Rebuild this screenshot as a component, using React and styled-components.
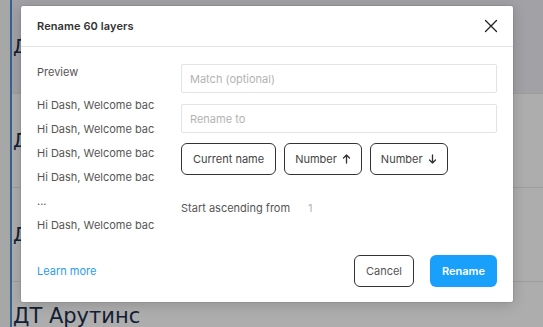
import React, { useState } from 'react';
import styled, { createGlobalStyle } from 'styled-components';

const GlobalStyle = createGlobalStyle`
    html, body { margin: 0; padding: 0; }
    body {
        width: 543px;
        height: 327px;
        overflow: hidden;
        font-family: Inter, "Noto Sans", sans-serif;
        background: #ffffff;
    }
`

const Page = styled.div`
    position: relative;
    width: 543px;
    height: 327px;
    overflow: hidden;
    display: flex;
`

const Gutter = styled.div`
    width: 10px;
    flex: none;
    background: #f7f7f7;
    border-right: 2px solid #4f93d6;
`

const Table = styled.div`
    flex: 1;
    display: flex;
    flex-direction: column;
`

const Row = styled.div`
    height: 94px;
    flex: none;
    border-bottom: 1px solid #e8e8e8;
    background: ${p => p.$head ? '#efeef4' : '#ffffff'};
    padding: 34px 0 0 1px;
    box-sizing: border-box;
    font-family: "DejaVu Sans", sans-serif;
    font-size: 20px;
    color: #1c2f4d;
    white-space: nowrap;
`

const LastRow = styled(Row)`
    height: auto;
    padding-top: 22px;
    font-size: 21px;
    border-bottom: none;
`

const Overlay = styled.div`
    position: absolute;
    inset: 0;
    background: rgba(0, 0, 0, 0.32);
    padding: 6px 0 0 21px;
    box-sizing: border-box;
`

const Modal = styled.div`
    width: 492px;
    height: 296px;
    background: #ffffff;
    border-radius: 2px;
    box-shadow: 0 2px 14px rgba(0, 0, 0, 0.18), 0 0 0 0.5px rgba(0, 0, 0, 0.12);
    display: flex;
    flex-direction: column;
`

const Header = styled.div`
    height: 40px;
    flex: none;
    display: flex;
    align-items: center;
    justify-content: space-between;
    padding: 0 14px 0 16px;
    border-bottom: 1px solid #e5e5e5;
`

const Title = styled.div`
    font-size: 11px;
    font-weight: 600;
    color: #333333;
    letter-spacing: 0.1px;
`

const CloseButton = styled.button`
    border: none;
    background: none;
    padding: 0;
    width: 16px;
    height: 16px;
    display: flex;
    align-items: center;
    justify-content: center;
    cursor: pointer;
`

const Body = styled.div`
    flex: 1;
    display: flex;
    padding: 17px 16px 0 16px;
`

const PreviewCol = styled.div`
    width: 144px;
    flex: none;
    display: flex;
    flex-direction: column;
`

const PreviewLabel = styled.div`
    font-size: 11px;
    color: #555555;
    line-height: 14px;
    margin: 1px 0 19px;
`

const PreviewItem = styled.div`
    font-size: 11px;
    color: #555555;
    line-height: 14px;
    height: 24px;
    white-space: nowrap;
`

const FormCol = styled.div`
    flex: 1;
    display: flex;
    flex-direction: column;
`

const Field = styled.input`
    height: 29px;
    box-sizing: border-box;
    border: 1px solid #e3e3e3;
    border-radius: 2px;
    padding: 0 8px;
    font-family: inherit;
    font-size: 11px;
    color: #333333;
    margin-bottom: ${p => p.$gap || 11}px;
    outline: none;
    &::placeholder { color: #b3b3b3; }
`

const ChipRow = styled.div`
    display: flex;
    gap: 8px;
`

const Chip = styled.button`
    height: 32px;
    box-sizing: border-box;
    border: 1px solid #333333;
    border-radius: 6px;
    background: #ffffff;
    padding: 0 ${p => p.$pad || 12}px;
    font-family: inherit;
    font-size: 11px;
    color: #444444;
    display: flex;
    align-items: center;
    gap: 5px;
    cursor: pointer;
`

const StartLine = styled.div`
    display: flex;
    align-items: center;
    margin-top: 26px;
    font-size: 11px;
    color: #555555;
    line-height: 14px;
`

const StartValue = styled.span`
    margin-left: 18px;
    color: #b3b3b3;
`

const Footer = styled.div`
    height: 47px;
    flex: none;
    display: flex;
    align-items: flex-start;
    padding: 0 16px;
`

const LearnMore = styled.a`
    font-size: 11px;
    color: #2c9bf0;
    text-decoration: none;
    margin-top: 9px;
    flex: 1;
    cursor: pointer;
`

const CancelButton = styled.button`
    width: 60px;
    height: 32px;
    box-sizing: border-box;
    border: 1px solid #333333;
    border-radius: 6px;
    background: #ffffff;
    font-family: inherit;
    font-size: 11px;
    color: #555555;
    margin-right: 16px;
    cursor: pointer;
`

const PrimaryButton = styled.button`
    width: 67px;
    height: 32px;
    border: none;
    border-radius: 6px;
    background: #18a0fb;
    font-family: inherit;
    font-size: 11px;
    font-weight: 600;
    color: #ffffff;
    cursor: pointer;
`

const Arrow = ({ down }) => (
    <svg width="9" height="10" viewBox="0 0 9 10" fill="none" stroke="#333" strokeWidth="1.3" strokeLinecap="round" strokeLinejoin="round">
        {down
            ? <path d="M4.5 1v8M1.5 6l3 3 3-3" />
            : <path d="M4.5 9V1M1.5 4l3-3 3 3" />}
    </svg>
)

// the preview column clips each name in the app, so the cut text is the content
const previews = ['Hi Dash, Welcome bac', 'Hi Dash, Welcome bac', 'Hi Dash, Welcome bac', 'Hi Dash, Welcome bac', '...', 'Hi Dash, Welcome bac']

const App = () => {
    const [match, setMatch] = useState('');
    const [rename, setRename] = useState('');

    return (
        <>
            <GlobalStyle />
            <Page>
                <Gutter />
                <Table>
                    <Row $head>Д</Row>
                    <Row>Д</Row>
                    <Row>Д</Row>
                    <LastRow>ДТ Арутинс</LastRow>
                </Table>
                <Overlay>
                    <Modal>
                        <Header>
                            <Title>Rename 60 layers</Title>
                            <CloseButton>
                                <svg width="14" height="14" viewBox="0 0 14 14" stroke="#222" strokeWidth="1.3" strokeLinecap="round">
                                    <path d="M1.5 1.5l11 11M12.5 1.5l-11 11" />
                                </svg>
                            </CloseButton>
                        </Header>
                        <Body>
                            <PreviewCol>
                                <PreviewLabel>Preview</PreviewLabel>
                                {previews.map((p, i) => (
                                    <PreviewItem key={i}>{p}</PreviewItem>
                                ))}
                            </PreviewCol>
                            <FormCol>
                                <Field placeholder="Match (optional)" value={match} onChange={(e) => setMatch(e.target.value)} />
                                <Field placeholder="Rename to" $gap={10} value={rename} onChange={(e) => setRename(e.target.value)} />
                                <ChipRow>
                                    <Chip $pad={11}>Current name</Chip>
                                    <Chip $pad={10}>Number <Arrow /></Chip>
                                    <Chip $pad={10}>Number <Arrow down /></Chip>
                                </ChipRow>
                                <StartLine>
                                    Start ascending from
                                    <StartValue>1</StartValue>
                                </StartLine>
                            </FormCol>
                        </Body>
                        <Footer>
                            <LearnMore>Learn more</LearnMore>
                            <CancelButton>Cancel</CancelButton>
                            <PrimaryButton>Rename</PrimaryButton>
                        </Footer>
                    </Modal>
                </Overlay>
            </Page>
        </>
    )
}

export default App
